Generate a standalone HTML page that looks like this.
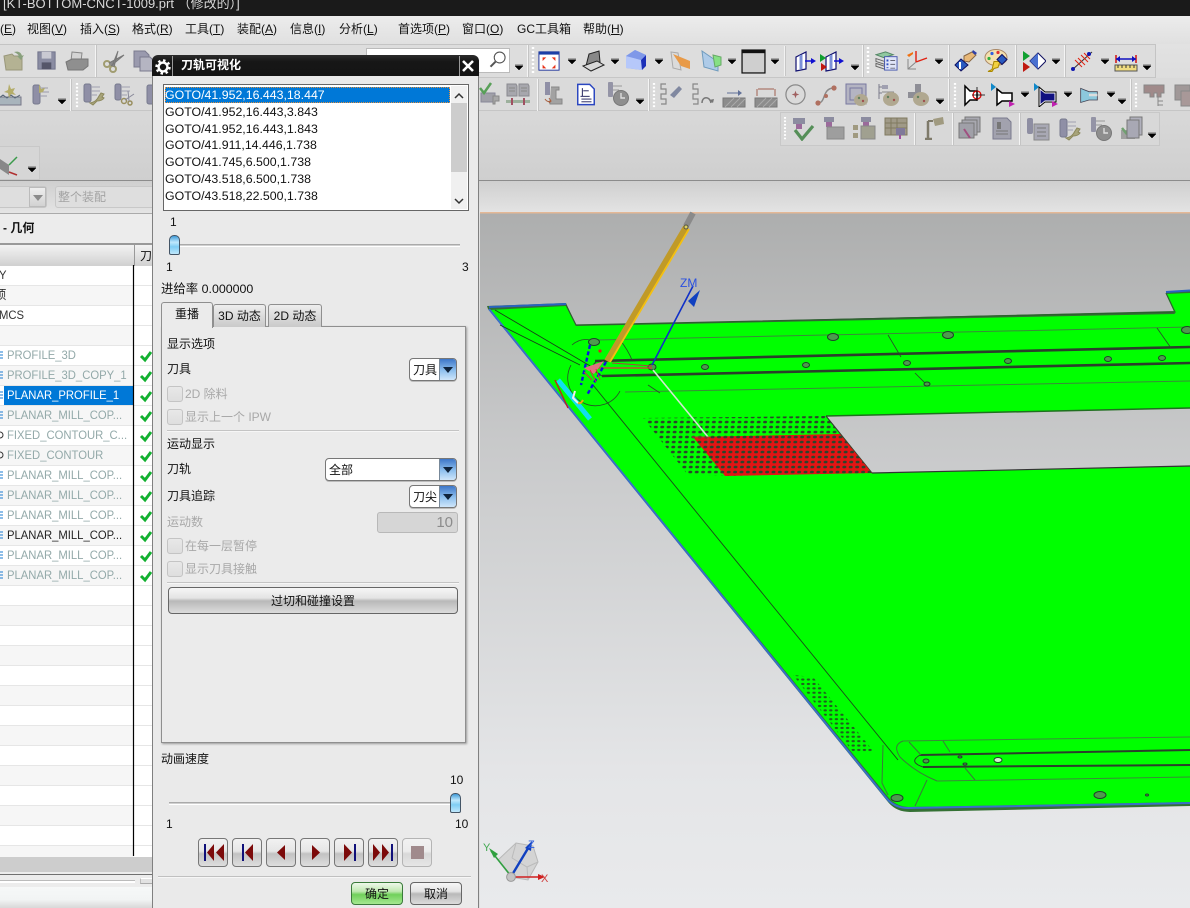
<!DOCTYPE html>
<html><head><meta charset="utf-8"><style>
html,body{margin:0;padding:0}
body{width:1190px;height:908px;overflow:hidden;position:relative;background:#e0e0e0;font:12px/16px "Liberation Sans","Noto Sans CJK SC",sans-serif;color:#111}
div{position:absolute;box-sizing:border-box}
.t{white-space:nowrap}
.m{top:21px}.m u{text-decoration:underline}
.r{left:0;width:134px;height:20px;border-bottom:1px solid #e6e6e6;background:#fff;overflow:hidden}
.r.a{background:#f6f6f6}
.n{left:7px;white-space:nowrap;color:#93a9a9;font-size:12.4px;line-height:19px;top:0;transform:scaleX(.91);transform-origin:0 0}
.dis{color:#a8a8a8}
.cb{width:16px;height:16px;border:1px solid #c4c4c4;border-radius:3px;background:linear-gradient(#e8e8e8,#dedede);left:167px}
.dd{background:#fff;border:1px solid #777;border-radius:4px;overflow:hidden;box-shadow:0 1px 0 #bbb}
.dd i{position:absolute;right:0;top:0;bottom:0;width:16px;background:linear-gradient(#3d76c8,#8fc0ee 55%,#cfe6fa);border-left:1px solid #789}
.dd b{position:absolute;right:3px;top:8px;border:5px solid transparent;border-top:6px solid #10243c;border-bottom:0}
.btn{background:linear-gradient(#f6f6f6,#e4e4e4 40%,#b9b9b9 52%,#dcdcdc);border:1px solid #666;border-radius:4px;text-align:center}
.pb{top:838px;width:30px;height:29px;background:linear-gradient(#f2f2f2,#e6e6e6 45%,#c2c2c2 55%,#dedede);border:1px solid #777;border-radius:4px}
.pb svg{position:absolute;left:0;top:0}
.tab{border:1px solid #8f8f8f;border-bottom:0;border-radius:3px 3px 0 0;text-align:center;background:linear-gradient(#eeeeee,#c9c9c9)}
.thumb{width:11px;height:20px;border:1px solid #456;border-radius:5px 5px 2px 2px;background:linear-gradient(#3e9ad8,#bfe8fc 35%,#7fcdf4 60%,#bfe8fb)}
</style></head><body>

<!-- title -->
<div style="left:0;top:0;width:1190px;height:16px;background:#1a1a1a;overflow:hidden"><div class="t" style="left:3px;top:-4px;color:#d8d8d8;font-size:13px">[KT-BOTTOM-CNCT-1009.prt （修改的）]</div></div>
<!-- menu -->
<div style="left:0;top:16px;width:1190px;height:28px;background:linear-gradient(#ececec,#e0e0e0)"></div>
<div class="t m" style="left:0">(<u>E</u>)</div>
<div class="t m" style="left:27px">视图(<u>V</u>)</div>
<div class="t m" style="left:80px">插入(<u>S</u>)</div>
<div class="t m" style="left:132px">格式(<u>R</u>)</div>
<div class="t m" style="left:185px">工具(<u>T</u>)</div>
<div class="t m" style="left:237px">装配(<u>A</u>)</div>
<div class="t m" style="left:290px">信息(<u>I</u>)</div>
<div class="t m" style="left:339px">分析(<u>L</u>)</div>
<div class="t m" style="left:398px">首选项(<u>P</u>)</div>
<div class="t m" style="left:462px">窗口(<u>O</u>)</div>
<div class="t m" style="left:517px">GC工具箱</div>
<div class="t m" style="left:583px">帮助(<u>H</u>)</div>

<!-- toolbar backdrop -->
<div style="left:0;top:44px;width:1190px;height:137px;background:linear-gradient(#e2e2e2,#cfcfcf);border-bottom:1px solid #8c8c8c;box-shadow:0 1px 1px #aaa"></div>
<div style="left:0;top:44px;width:1155px;height:34px;background:#dddddd;border-top:1px solid #c4c4c4;border-bottom:1px solid #c6c6c6"></div>
<div style="left:1155px;top:44px;width:1px;height:34px;background:#c4c4c4"></div>
<div style="left:0;top:78px;width:1190px;height:33px;background:#dadada;border-bottom:1px solid #c6c6c6"></div>
<div style="left:780px;top:112px;width:380px;height:34px;background:#d8d8d8;border:1px solid #c8c8c8"></div>
<div style="left:0;top:146px;width:40px;height:34px;background:#d6d6d6;border:1px solid #c8c8c8;border-left:0"></div>
<div style="left:366px;top:48px;width:144px;height:25px;background:#fff;border:1px solid #bbb"></div>

<svg width="1190" height="181" style="position:absolute;left:0;top:0" xmlns="http://www.w3.org/2000/svg">
<defs>
<symbol id="folder" viewBox="0 0 24 24"><path d="M2 7l8-2 2 2 8 0v14H4z" fill="#b4b293" stroke="#99977a"/><path d="M12 3c4-1 7 0 8 4l2-1-3 5-4-4 2 0c-1-2-3-3-5-4z" fill="#88a07c"/></symbol>
<symbol id="floppy" viewBox="0 0 24 24"><rect x="3" y="3" width="18" height="18" fill="#8a8ca2" stroke="#70728a"/><rect x="7" y="3" width="10" height="7" fill="#c9c9d2"/><rect x="7" y="14" width="10" height="7" fill="#55566a"/></symbol>
<symbol id="printer" viewBox="0 0 24 24"><path d="M7 3l10 1-1 8H6z" fill="#d4d4d4" stroke="#888"/><path d="M1 13l6-3h16v7l-5 4H3z" fill="#8f8f8f" stroke="#777"/></symbol>
<symbol id="scissors" viewBox="0 0 24 24"><g fill="none" stroke="#a09c70" stroke-width="2"><circle cx="5" cy="15" r="3"/><circle cx="11" cy="20" r="3"/></g><path d="M7 14L22 6 9 17M10 17L16 2 12 18" fill="#8a8a8a" stroke="#777"/></symbol>
<symbol id="doc" viewBox="0 0 24 24"><path d="M2 2h11l4 4v12H2z" fill="#9a9aae" stroke="#7a7a8e"/><path d="M8 8h10l4 4v10H8z" fill="#b5b5c2" stroke="#7a7a8e"/></symbol>
<symbol id="mag" viewBox="0 0 24 24"><circle cx="14" cy="9" r="6.5" fill="#fff" stroke="#555" stroke-width="1.3"/><path d="M9 14l-6 6" stroke="#555" stroke-width="2.4"/></symbol>
<symbol id="fit" viewBox="0 0 24 24"><rect x="1" y="2" width="22" height="20" fill="#fff" stroke="#1a2f9a"/><rect x="1" y="2" width="22" height="3" fill="#1c3fa6"/><path d="M5 8h4l-4 4zM19 8h-4l4 4zM5 20h4l-4-4zM19 20h-4l4-4z" fill="#e8341c"/></symbol>
<symbol id="laptop" viewBox="0 0 24 24"><path d="M5 17L8 5 18 2l1 11z" fill="#888" stroke="#222"/><path d="M2 17l14-5 7 4-13 6z" fill="#d8d8d8" stroke="#222"/></symbol>
<symbol id="cube" viewBox="0 0 24 24"><path d="M11 1l11 5-4 15-16-2V7z" fill="#8ca6f0"/><path d="M2 7l15 4 1 10-16-2z" fill="#b6c8fa"/><path d="M17 11l5-5v11l-4 4z" fill="#1c30b8"/><path d="M11 1l11 5-5 5-15-4z" fill="#7f98e8"/></symbol>
<symbol id="opanel" viewBox="0 0 24 24"><path d="M3 3l7 1 3 17-8-2z" fill="#dbdbdb" stroke="#aaa"/><path d="M5 5l17 7v8l-9-3z" fill="#e89a48"/></symbol>
<symbol id="gpanel" viewBox="0 0 24 24"><path d="M3 2l16 11v9L5 18z" fill="#aecbe8" stroke="#6f9bbd"/><path d="M14 6l8 2v8l-6 2z" fill="#86e084" stroke="#6a6"/></symbol>
<symbol id="sq" viewBox="0 0 24 24"><rect x="1" y="1" width="22" height="22" fill="#cfcfcf" stroke="#111" stroke-width="1.2"/><rect x="1" y="1" width="22" height="3" fill="#111"/></symbol>
<symbol id="w1" viewBox="0 0 24 24"><path d="M3 8l10-5v17L3 22z" fill="#fff" stroke="#101070" stroke-width="1.2"/><path d="M8 6v14" stroke="#7c90d8" stroke-width="3"/><path d="M12 12h8" stroke="#1010d0" stroke-width="1.5"/><path d="M18 9l5 3-5 3z" fill="#1010d0"/></symbol>
<symbol id="w2" viewBox="0 0 24 24"><path d="M6 8l10-5v17L6 22z" fill="#fff" stroke="#101070" stroke-width="1.2"/><path d="M11 6v14" stroke="#7c90d8" stroke-width="3"/><path d="M0 5l6 4-6 4z" fill="#10a030"/><path d="M1 14l6 4-6 4z" fill="#c01810"/><path d="M14 12h6" stroke="#1010d0" stroke-width="1.5"/><path d="M19 9l5 3-5 3z" fill="#1010d0"/></symbol>
<symbol id="layers" viewBox="0 0 24 24"><path d="M1 6l10-3 8 3-10 3z" fill="#90c8a0" stroke="#586"/><path d="M1 10l9 3v3L1 13zM1 15l9 3v3l-9-3z" fill="#ddd" stroke="#666"/><rect x="10" y="8" width="13" height="14" fill="#dfe4f8" stroke="#4a5ab0"/><path d="M12 11h2v2h-2zM12 15h2v2h-2zM12 19h2v1h-2z" fill="#3050c0"/><path d="M16 12h5M16 16h5M16 20h5" stroke="#667"/></symbol>
<symbol id="axes" viewBox="0 0 24 24"><path d="M11 13V2M11 13L22 9" stroke="#e02010" stroke-width="1.4" fill="none"/><path d="M11 13L3 20M3 10v10h8" stroke="#888" fill="none"/><path d="M2 6l6-3 0 2-4 3z" fill="#f07010"/></symbol>
<symbol id="hand" viewBox="0 0 24 24"><path d="M10 8l8-4 4 3-7 7-5-1z" fill="#e8b878" stroke="#864"/><path d="M19 2l4 3-2 2-3-3z" fill="#3040a8"/><path d="M7 11l7 6-7 6-6-6z" fill="#2a5ac0" stroke="#101060"/><path d="M6 14v7" stroke="#fff" stroke-width="2"/></symbol>
<symbol id="pal" viewBox="0 0 24 24"><ellipse cx="12" cy="9" rx="11" ry="8" fill="#f4e0b0" stroke="#a86"/><circle cx="8" cy="5" r="1.6" fill="#3060e0"/><circle cx="14" cy="4" r="1.6" fill="#e03030"/><circle cx="5" cy="10" r="1.6" fill="#30b040"/><path d="M4 23l4-2 2-8 6 0-2 6-4 1-2 3z" fill="#f2d040" stroke="#a80"/><path d="M18 6l5 5-5 5-5-5z" fill="#2a5ac0" stroke="#101060"/></symbol>
<symbol id="fd" viewBox="0 0 24 24"><path d="M1 2l7 5-7 5z" fill="#10a030"/><path d="M1 13l7 5-7 5z" fill="#c01810"/><path d="M16 4l8 8-8 8-8-8z" fill="#fff" stroke="#101060"/><path d="M16 4l-8 8 8 8z" fill="#4a70d0"/></symbol>
<symbol id="ticks" viewBox="0 0 24 24"><path d="M2 21L22 3" stroke="#333" stroke-width="1"/><path d="M5 11l7 7M8 9l7 7M11 6l7 7M14 4l6 6" stroke="#e02010"/><circle cx="3" cy="20" r="2" fill="#1018b0"/><circle cx="19" cy="5" r="2" fill="#1018b0"/></symbol>
<symbol id="ruler" viewBox="0 0 24 24"><path d="M2 5v8M22 5v8" stroke="#d01010" stroke-width="1.5"/><path d="M2 9h20" stroke="#1010c0" stroke-width="1.4"/><path d="M2 9l4-3v6zM22 9l-4-3v6z" fill="#1010c0"/><rect x="1" y="15" width="22" height="6" fill="#f0dc80" stroke="#555"/><path d="M4 15v3M8 15v3M12 15v3M16 15v3M20 15v3" stroke="#333"/></symbol>
<symbol id="wave" viewBox="0 0 24 24"><rect x="1" y="15" width="22" height="8" fill="#a8b4bc" stroke="#778"/><path d="M1 16l4-3 4 3 4-3 4 3 5-3" stroke="#567" fill="none"/><path d="M11 2l2 5 4-1-2 4 3 3-5-1-2 4-1-5-4-1 4-2z" fill="#b4ad6a"/></symbol>
<symbol id="cyl" viewBox="0 0 24 24"><rect x="3" y="3" width="7" height="19" rx="2" fill="#8f8fa6" stroke="#777a8e"/><path d="M10 6h8M10 10h9M10 14h7" stroke="#9b9bab"/><path d="M9 2l2 5 4-1-2 4-4 1" fill="#b4ad6a"/></symbol>
<symbol id="cylw" viewBox="0 0 24 24"><rect x="2" y="2" width="7" height="18" rx="2" fill="#8f8fa6" stroke="#777a8e"/><path d="M9 5h9M9 9h9M9 13h6" stroke="#a0a0b0"/><path d="M8 21c5-1 7-3 9-7l2-3 3 1-2 3 2 1c-2 3-5 3-7 3l-4 4z" fill="#a8a47a" stroke="#8c885c"/></symbol>
<symbol id="cyls" viewBox="0 0 24 24"><rect x="2" y="2" width="6" height="16" rx="2" fill="#8f8fa6" stroke="#777a8e"/><path d="M8 5h9M8 9h9M8 13h6" stroke="#a0a0b0"/><circle cx="11" cy="19" r="2.5" fill="none" stroke="#998f60" stroke-width="1.5"/><circle cx="17" cy="21" r="2" fill="none" stroke="#998f60" stroke-width="1.5"/><path d="M12 18l9-6M16 19l-1-10" stroke="#889"/></symbol>
<symbol id="chkm" viewBox="0 0 24 24"><rect x="3" y="11" width="14" height="9" fill="#a0a0a8" stroke="#889"/><path d="M15 14h6v5h-4v3h-2z" fill="#a8a8a8" stroke="#888"/><path d="M2 6l4 5L13 1" fill="none" stroke="#58a058" stroke-width="2.5"/></symbol>
<symbol id="twin" viewBox="0 0 24 24"><path d="M1 2h9l1 2v10H1zM13 2h9l1 2v10H13z" fill="#a7a7ad" stroke="#8a8a90"/><path d="M3 6h6M3 9h6M15 6h6M15 9h6" stroke="#888"/><rect x="0" y="18" width="24" height="3" fill="#9cb09c"/><path d="M6 16v7M18 16v7" stroke="#a05060" stroke-width="2"/></symbol>
<symbol id="mach" viewBox="0 0 24 24"><rect x="2" y="0" width="5" height="13" fill="#8f8fa6"/><path d="M8 5h8v3h-3v9h6v5H7v-4" fill="#a2a2a2" stroke="#888"/><path d="M2 17c2 3 4 3 6 2l-2-3M8 19l-2 2" stroke="#a86040" fill="none"/></symbol>
<symbol id="rep" viewBox="0 0 24 24"><path d="M3 1h13l5 5v17H3z" fill="#fff" stroke="#2a46c0" stroke-width="1.6"/><path d="M8 5v9M6 14h10M7 17h11M7 20h11M9 8h6" stroke="#101050"/></symbol>
<symbol id="cylc" viewBox="0 0 24 24"><rect x="2" y="0" width="5" height="15" rx="1" fill="#9494a6"/><path d="M7 4h9M7 8h6" stroke="#999"/><circle cx="15" cy="16" r="7.5" fill="#8e8e8e" stroke="#777"/><path d="M15 11v5h4" stroke="#ddd" stroke-width="1.4" fill="none"/></symbol>
<symbol id="ssf" viewBox="0 0 24 24"><path d="M7 2H2v5h5v5H2v5h5v5H2" fill="none" stroke="#888" stroke-width="1.2"/><path d="M11 13l9-9 3 3-8 9z" fill="#8088a0"/></symbol>
<symbol id="ssa" viewBox="0 0 24 24"><path d="M7 2H2v5h5v5H2v5h5v5H2" fill="none" stroke="#888" stroke-width="1.2"/><path d="M11 21c0-7 8-7 9 0" fill="none" stroke="#777" stroke-width="1.5"/><path d="M18 18l4 3 1-4z" fill="#777"/></symbol>
<symbol id="hatch" viewBox="0 0 24 24"><rect x="1" y="14" width="22" height="9" fill="#8c8c8c" stroke="#777"/><path d="M3 23l9-9M9 23l9-9M15 23l8-8" stroke="#aaa"/><path d="M5 9h12" stroke="#607098"/><path d="M16 6l4 3-4 3z" fill="#607098"/></symbol>
<symbol id="hatch2" viewBox="0 0 24 24"><rect x="1" y="14" width="22" height="9" fill="#8c8c8c" stroke="#777"/><path d="M3 23l9-9M9 23l9-9M15 23l8-8" stroke="#aaa"/><path d="M4 5h16M3 5v7M21 5v7" stroke="#a06050"/></symbol>
<symbol id="circ" viewBox="0 0 24 24"><circle cx="12" cy="12" r="10" fill="none" stroke="#8a8a8a" stroke-width="1.3"/><path d="M12 8l1 3 3 1-3 1-1 3-1-3-3-1 3-1z" fill="#a06060"/></symbol>
<symbol id="curve" viewBox="0 0 24 24"><path d="M4 20c8 0 4-14 15-15" fill="none" stroke="#8a8a8a" stroke-width="1.5"/><circle cx="4" cy="20" r="2.6" fill="#b07060"/><circle cx="20" cy="5" r="2.6" fill="#b07060"/><circle cx="12" cy="13" r="2" fill="#b07060"/></symbol>
<symbol id="fp" viewBox="0 0 24 24"><rect x="1" y="1" width="20" height="20" fill="#b4b4c2" stroke="#7878a0"/><rect x="5" y="5" width="12" height="12" fill="none" stroke="#7878a0"/><ellipse cx="16" cy="17" rx="7" ry="6" fill="#b0a890"/><circle cx="14" cy="15" r="1.2" fill="#608060"/><circle cx="18" cy="18" r="1.2" fill="#a05050"/></symbol>
<symbol id="lp" viewBox="0 0 24 24"><path d="M3 1v15M3 4h3M3 10h3" stroke="#7a7a8a" fill="none"/><rect x="6" y="2" width="6" height="4" fill="#a0a0b0"/><path d="M6 9h12" stroke="#888"/><ellipse cx="15" cy="16" rx="8" ry="7" fill="#b0a890"/><circle cx="12" cy="14" r="1.2" fill="#608060"/><circle cx="18" cy="17" r="1.2" fill="#a05050"/></symbol>
<symbol id="pp" viewBox="0 0 24 24"><path d="M9 1h6v10l-5 4H2V9h7z" fill="#8e8e96"/><ellipse cx="15" cy="16" rx="8" ry="7" fill="#b0a890"/><circle cx="12" cy="14" r="1.2" fill="#608060"/><circle cx="18" cy="18" r="1.2" fill="#a05050"/></symbol>
<symbol id="t1" viewBox="0 0 24 24"><path d="M3 3l5 5h7v9H8l-5 5z" fill="#fff" stroke="#000" stroke-width="1.5"/><circle cx="15" cy="12" r="4" fill="none" stroke="#e00000" stroke-width="1.2"/><path d="M10 12h13M15 4v14" stroke="#000" stroke-width=".8"/></symbol>
<symbol id="t2" viewBox="0 0 24 24"><path d="M6 6l5 4h10v8H11l-5 4z" fill="#fff" stroke="#000" stroke-width="1.5"/><path d="M0 0l5 4-5 4z" fill="#1088c8"/><path d="M18 18l6 3-6 3z" fill="#c020b0"/></symbol>
<symbol id="t3" viewBox="0 0 24 24"><path d="M6 6l5 4h10v8H11l-5 4z" fill="#101080" stroke="#fff" stroke-width="1"/><path d="M5 4l6 5h11v10H11l-6 5z" fill="none" stroke="#000"/><path d="M0 0l5 4-5 4z" fill="#1088c8"/><path d="M18 18l6 3-6 3z" fill="#c020b0"/></symbol>
<symbol id="t4" viewBox="0 0 24 24"><path d="M2 4l10 4h10v10H12L2 21z" fill="#8cc8dc" stroke="#445"/><path d="M12 12h10" stroke="#ddd" stroke-width="3"/></symbol>
<symbol id="m1" viewBox="0 0 24 24"><path d="M1 2h20v8h-3v4h-4v-4h-3v4H7v-4H1z" fill="#a08a8a" stroke="#888"/><path d="M15 14v9M15 18h5M15 22h5" stroke="#888"/></symbol>
<symbol id="m2" viewBox="0 0 24 24"><rect x="2" y="2" width="15" height="15" fill="#a09898" stroke="#888"/><rect x="8" y="8" width="15" height="15" fill="#a89898" stroke="#888"/></symbol>
<symbol id="cv" viewBox="0 0 24 24"><rect x="2" y="1" width="12" height="6" fill="#8c8ca0"/><rect x="5" y="7" width="6" height="5" fill="#9b6a9b"/><path d="M4 13l7 9L22 9" fill="none" stroke="#558f58" stroke-width="3.2"/></symbol>
<symbol id="c2" viewBox="0 0 24 24"><rect x="2" y="1" width="10" height="5" fill="#8c8ca0"/><rect x="4" y="6" width="6" height="5" fill="#9b6a9b"/><rect x="5" y="11" width="17" height="12" fill="#9e9e9e" stroke="#888"/></symbol>
<symbol id="c3" viewBox="0 0 24 24"><rect x="9" y="1" width="10" height="5" fill="#8c8ca0"/><rect x="11" y="6" width="6" height="4" fill="#9b6a9b"/><rect x="9" y="10" width="14" height="13" fill="#a0a090" stroke="#888"/><rect x="1" y="9" width="5" height="5" fill="#a09a80"/><rect x="1" y="17" width="5" height="5" fill="#a09a80"/></symbol>
<symbol id="c4" viewBox="0 0 24 24"><rect x="1" y="2" width="22" height="17" fill="#a09a88" stroke="#807a60"/><path d="M1 7h22M1 12h22M7 2v17M13 2v17" stroke="#807a60"/><rect x="12" y="12" width="9" height="7" fill="#807a9a"/><path d="M16 19v4" stroke="#a050a0" stroke-width="2"/></symbol>
<symbol id="c5" viewBox="0 0 24 24"><path d="M6 5v17M3 23h7" stroke="#7e7a6a" stroke-width="2.5"/><path d="M6 5h5" stroke="#7e7a6a" stroke-width="2"/><path d="M11 3l10-2 1 7-9 2z" fill="#a09a80"/></symbol>
<symbol id="c6" viewBox="0 0 24 24"><rect x="7" y="1" width="15" height="15" fill="#a8a8b0" stroke="#777"/><rect x="4" y="4" width="15" height="15" fill="#a8a8b0" stroke="#777"/><rect x="1" y="7" width="15" height="15" fill="#a0a0a8" stroke="#777"/><path d="M6 13l6 9" stroke="#a05080" stroke-width="2"/></symbol>
<symbol id="c7" viewBox="0 0 24 24"><path d="M3 2h14l4 4v17H3z" fill="#a2a2ae" stroke="#7a7a8e"/><rect x="7" y="6" width="4" height="7" fill="#777"/><path d="M6 15h12M6 18h12" stroke="#777"/></symbol>
<symbol id="c8" viewBox="0 0 24 24"><rect x="1" y="1" width="6" height="16" rx="2" fill="#8e8ea2"/><rect x="8" y="7" width="15" height="16" fill="#a8a8b4" stroke="#888"/><path d="M11 11h9M11 15h9M11 19h9" stroke="#777"/></symbol>
<symbol id="c9" viewBox="0 0 24 24"><rect x="2" y="14" width="14" height="9" fill="#a0a0a0"/><path d="M3 12l4 5L16 6" fill="none" stroke="#70a070" stroke-width="2.5"/><rect x="11" y="1" width="12" height="18" fill="#b0b0bc" stroke="#777"/><rect x="8" y="4" width="12" height="18" fill="#a8a8b4" stroke="#777"/></symbol>
<symbol id="view" viewBox="0 0 24 24"><path d="M0 5l12 8v10L0 15z" fill="#888"/><path d="M12 13l8-8" stroke="#3a9a4a" stroke-width="1.5"/><path d="M12 20l8 3" stroke="#b03030" stroke-width="1.5"/></symbol>
<symbol id="dd" viewBox="0 0 8 6"><path d="M0 1h8M0 2h8l-4 4z" fill="#000" stroke="#000" stroke-width=".5"/></symbol>
<symbol id="grip" viewBox="0 0 4 28"><path d="M2 0v28" stroke="#fff" stroke-width="2.4" stroke-dasharray="2 2"/></symbol>
<symbol id="sep" viewBox="0 0 2 32"><path d="M.5 0v32" stroke="#f4f4f4"/><path d="M1.5 0v32" stroke="#c4c4c4"/></symbol>
</defs>
<!-- row 1 -->
<g>
<use href="#folder" x="2" y="49" width="24" height="24"/><use href="#floppy" x="35" y="49" width="23" height="23"/><use href="#printer" x="65" y="49" width="24" height="24"/><use href="#sep" x="95" y="45" width="2" height="32"/><use href="#scissors" x="102" y="49" width="24" height="24"/><use href="#doc" x="132" y="49" width="24" height="24"/>
<use href="#mag" x="488" y="50" width="20" height="20"/><use href="#dd" x="515" y="64" width="8" height="6"/><use href="#sep" x="527" y="45" width="2" height="32"/><use href="#grip" x="531" y="47" width="4" height="28"/>
<use href="#fit" x="538" y="50" width="22" height="22"/><use href="#dd" x="568" y="58" width="8" height="6"/>
<use href="#laptop" x="581" y="49" width="24" height="24"/><use href="#dd" x="611" y="58" width="8" height="6"/>
<use href="#cube" x="624" y="49" width="24" height="24"/><use href="#dd" x="655" y="58" width="8" height="6"/>
<use href="#opanel" x="668" y="49" width="24" height="24"/><use href="#gpanel" x="699" y="49" width="24" height="24"/><use href="#dd" x="728" y="58" width="8" height="6"/>
<use href="#sq" x="741" y="49" width="25" height="25"/><use href="#dd" x="771" y="58" width="8" height="6"/><use href="#sep" x="784" y="46" width="2" height="30"/>
<use href="#w1" x="793" y="49" width="24" height="24"/><use href="#w2" x="820" y="49" width="24" height="24"/><use href="#dd" x="851" y="64" width="8" height="6"/><use href="#sep" x="862" y="45" width="2" height="32"/><use href="#grip" x="866" y="47" width="4" height="28"/>
<use href="#layers" x="875" y="49" width="23" height="23"/><use href="#axes" x="905" y="49" width="24" height="24"/><use href="#dd" x="935" y="58" width="8" height="6"/><use href="#sep" x="948" y="45" width="2" height="32"/>
<use href="#hand" x="954" y="48" width="24" height="24"/><use href="#pal" x="984" y="48" width="24" height="25"/><use href="#sep" x="1015" y="45" width="2" height="32"/>
<use href="#fd" x="1022" y="49" width="24" height="24"/><use href="#dd" x="1052" y="58" width="8" height="6"/><use href="#sep" x="1064" y="45" width="2" height="32"/>
<use href="#ticks" x="1070" y="49" width="24" height="24"/><use href="#dd" x="1101" y="58" width="8" height="6"/>
<use href="#ruler" x="1114" y="50" width="24" height="24"/><use href="#dd" x="1143" y="64" width="8" height="6"/>
</g>
<!-- row 2 -->
<g>
<use href="#wave" x="-2" y="82" width="24" height="24"/><use href="#cyl" x="30" y="82" width="24" height="24"/><use href="#dd" x="58" y="98" width="8" height="6"/><use href="#sep" x="70" y="79" width="2" height="32"/><use href="#grip" x="75" y="83" width="4" height="26"/>
<use href="#cylw" x="82" y="82" width="24" height="24"/><use href="#cyls" x="113" y="82" width="24" height="24"/><use href="#cyl" x="144" y="82" width="24" height="24"/>
<use href="#chkm" x="478" y="82" width="24" height="24"/><use href="#twin" x="506" y="82" width="24" height="24"/><use href="#sep" x="537" y="79" width="2" height="32"/>
<use href="#mach" x="543" y="82" width="24" height="24"/><use href="#rep" x="575" y="83" width="22" height="23"/><use href="#cylc" x="606" y="82" width="24" height="24"/><use href="#dd" x="636" y="98" width="8" height="6"/><use href="#sep" x="648" y="79" width="2" height="32"/><use href="#grip" x="652" y="83" width="4" height="26"/>
<use href="#ssf" x="659" y="82" width="24" height="24"/><use href="#ssa" x="691" y="82" width="24" height="24"/><use href="#hatch" x="722" y="84" width="24" height="24"/><use href="#hatch2" x="754" y="84" width="24" height="24"/><use href="#circ" x="784" y="83" width="23" height="23"/><use href="#curve" x="814" y="83" width="24" height="24"/><use href="#fp" x="845" y="83" width="24" height="24"/><use href="#lp" x="876" y="83" width="24" height="24"/><use href="#pp" x="906" y="83" width="24" height="24"/><use href="#dd" x="936" y="98" width="8" height="6"/><use href="#sep" x="948" y="79" width="2" height="32"/><use href="#grip" x="953" y="83" width="4" height="26"/>
<use href="#t1" x="962" y="83" width="24" height="24"/><use href="#t2" x="991" y="83" width="24" height="24"/><use href="#dd" x="1021" y="91" width="8" height="6"/><use href="#t3" x="1034" y="83" width="24" height="24"/><use href="#dd" x="1064" y="91" width="8" height="6"/><use href="#t4" x="1079" y="85" width="20" height="20"/><use href="#dd" x="1107" y="91" width="8" height="6"/><use href="#dd" x="1118" y="98" width="8" height="6"/><use href="#sep" x="1130" y="79" width="2" height="32"/><use href="#grip" x="1134" y="83" width="4" height="26"/>
<use href="#m1" x="1143" y="83" width="24" height="24"/><use href="#m2" x="1173" y="83" width="24" height="24"/>
</g>
<!-- row 3 -->
<g>
<use href="#grip" x="783" y="117" width="4" height="24"/>
<use href="#cv" x="791" y="117" width="24" height="24"/><use href="#c2" x="822" y="116" width="24" height="24"/><use href="#c3" x="852" y="116" width="24" height="24"/><use href="#c4" x="884" y="116" width="24" height="24"/><use href="#sep" x="914" y="113" width="2" height="32"/>
<use href="#c5" x="922" y="116" width="24" height="24"/><use href="#sep" x="952" y="113" width="2" height="32"/><use href="#c6" x="958" y="116" width="24" height="24"/><use href="#c7" x="990" y="116" width="24" height="24"/><use href="#sep" x="1019" y="113" width="2" height="32"/>
<use href="#c8" x="1026" y="117" width="24" height="24"/><use href="#cylw" x="1058" y="117" width="24" height="24"/><use href="#cylc" x="1089" y="117" width="24" height="24"/><use href="#c9" x="1119" y="116" width="24" height="24"/><use href="#dd" x="1148" y="132" width="8" height="6"/>
<use href="#view" x="-3" y="152" width="24" height="24"/><use href="#dd" x="28" y="166" width="8" height="6"/>
</g>
</svg>

<!-- filter bar -->
<div style="left:0;top:181px;width:1190px;height:32px;background:linear-gradient(#cfcfcf,#e4e4e4)"></div>
<div style="left:-4px;top:186px;width:51px;height:22px;border:1px solid #c6c6c6;border-radius:3px;background:#dedede"></div>
<div style="left:29px;top:187px;width:17px;height:20px;background:linear-gradient(#eee,#d2d2d2);border:1px solid #bbb"></div>
<div style="left:33px;top:195px;border:5px solid transparent;border-top:6px solid #8b8b8b;border-bottom:0"></div>
<div class="t" style="left:55px;top:186px;width:110px;height:22px;border:1px solid #c8c8c8;border-radius:3px;background:#dedede;color:#a3a3a3;padding:2px 2px">整个装配</div>

<!-- viewport -->
<svg width="1190" height="908" style="position:absolute;left:0;top:0" viewBox="0 0 1190 908" xmlns="http://www.w3.org/2000/svg">
<defs>
<linearGradient id="bg" gradientUnits="userSpaceOnUse" x1="0" y1="213" x2="0" y2="908"><stop offset="0" stop-color="#adaeae"/><stop offset=".33" stop-color="#c8c9ca"/><stop offset=".8" stop-color="#e4e5e7"/><stop offset="1" stop-color="#e9eaec"/></linearGradient>
<pattern id="dots" width="6.4" height="5" patternUnits="userSpaceOnUse" patternTransform="skewX(-5)"><ellipse cx="2" cy="2" rx="2" ry="1.35" fill="#2c442c"/></pattern>
<pattern id="dots3" width="5.6" height="4.4" patternUnits="userSpaceOnUse"><ellipse cx="2" cy="2" rx="1.7" ry="1.1" fill="#1f5f1f"/></pattern>
</defs>
<rect x="480" y="213" width="710" height="695" fill="url(#bg)"/>
<rect x="480" y="212" width="710" height="1.5" fill="#e4b896"/>
<!-- rim -->
<path d="M488 309L487 306 566 303 576 325 1175 311 1166 292 1190 290V806L910 812Q896 812 888 802Z" fill="#2a6a2a" opacity=".95"/>
<path d="M490 310L566 306 576 326 1175 314 1166 294 1190 293V802L908 807Q896 806 889 798Z" fill="#00ff00"/>
<path d="M489 309L888 800Q896 808 908 808L1190 803" fill="none" stroke="#3a70c8" stroke-width="2"/>
<path d="M489 307L566 304M1166 292L1190 290.500" fill="none" stroke="#2a62c0" stroke-width="2"/>
<path d="M566 305L576 325 1175 312 1166 293" fill="none" stroke="#2e5e30" stroke-width="1.2"/>
<!-- window -->
<path d="M826 416L1190 408V466L872 473Z" fill="url(#bg)"/>
<path d="M826 416L1190 408" stroke="#1f6f1f" stroke-width="1.5" fill="none"/><path d="M872 473L1190 466" stroke="#333" stroke-width="1.2" fill="none"/>
<path d="M826 416L872 473" stroke="#2c442c" stroke-width="1" fill="none"/>
<!-- red & perforation -->
<path d="M643 418L826 416 872 473 725 476 688 475Z" fill="url(#dots)"/>
<path d="M693 437L840 434 872 473 725 476Z" fill="#e41414"/>
<path d="M693 437L840 434 872 473 725 476Z" fill="url(#dots)"/>
<path d="M793 675L813 677 875 753 853 752Z" fill="url(#dots3)"/>
<!-- slots -->
<g fill="none" stroke="#2b3f2b">
<path d="M595 361L1190 347" stroke-width="2.600"/><path d="M602 376L1190 363" stroke-width="2.600"/>
<path d="M597 340L1190 327" stroke="#3a8a3a"/><path d="M625 392L1190 381" stroke="#3a8a3a"/>
<path d="M596 362Q588 368 602 376"/>
<path d="M920 755L1190 750" stroke-width="2"/><path d="M923 767L1190 765" stroke-width="2"/>
<path d="M920 755Q908 762 923 767"/>
<path d="M903 741L1190 737" stroke="#3a8a3a"/><path d="M937 781L1190 777" stroke="#3a8a3a"/>
<path d="M903 741Q892 745 900 757Q915 772 937 781" stroke="#3a7a3a"/>
<path d="M883 745L882 783 888 795M927 780L915 806M909 742L921 755M943 741L950 752M965 768L975 780" stroke="#3a7a3a"/>
<path d="M495 310L597 370M500 325L580 365" stroke="#1a3a1a" stroke-width=".8"/>
<path d="M593 385L898 760" stroke="#1a4a1a" stroke-width=".9"/>
<path d="M888 335L901 357M1157 328L1171 348M915 373L926 384M648 385L660 393M572 345A23 27 0 0 1 590 340M571 365A20 20 0 0 0 620 391M620 340Q628 350 632 360" stroke="#2a4a2a" stroke-width=".8"/>
</g>
<g fill="#4e9a4e" stroke="#20402a" stroke-width="1">
<ellipse cx="594" cy="342" rx="5.500" ry="3.500"/><ellipse cx="833" cy="337" rx="5.500" ry="3.500"/><ellipse cx="948" cy="335" rx="5.500" ry="3.500"/><ellipse cx="1187" cy="330" rx="5.500" ry="3.500"/>
<ellipse cx="705" cy="367" rx="3.500" ry="2.500"/><ellipse cx="806" cy="365" rx="3.500" ry="2.500"/><ellipse cx="907" cy="363" rx="3.500" ry="2.500"/><ellipse cx="1008" cy="361" rx="3.500" ry="2.500"/><ellipse cx="1108" cy="359" rx="3.500" ry="2.500"/><ellipse cx="1162" cy="358" rx="3.500" ry="2.500"/>
<ellipse cx="927" cy="384" rx="3" ry="2"/><ellipse cx="652" cy="367" rx="4" ry="3"/>
<ellipse cx="926" cy="761" rx="3" ry="2"/><ellipse cx="998" cy="760" rx="4" ry="2.500" fill="#d0f0d0"/><ellipse cx="960" cy="757" rx="2" ry="1"/><ellipse cx="965" cy="764" rx="2" ry="1"/>
<ellipse cx="897" cy="798" rx="6" ry="3.500"/><ellipse cx="1100" cy="795" rx="6" ry="3.500"/><ellipse cx="1147" cy="795" rx="1.500" ry="1"/>
</g>
<!-- tool -->
<path d="M686 226L693 213" stroke="#8a8a8a" stroke-width="6"/>
<path d="M686 227L607 361" stroke="#c09a28" stroke-width="6"/>
<path d="M689 229L610 362" stroke="#f4c010" stroke-width="1.800"/>
<circle cx="686" cy="227" r="2" fill="#ddd060" stroke="#554"/>
<!-- zm arrow -->
<path d="M652 365L693 286" stroke="#1030c8" stroke-width="1.600"/>
<path d="M700 290L688 301 694 307Z" fill="#1040c0"/>
<text x="680" y="287" font-family="Liberation Sans" font-size="12" fill="#2a50e0">ZM</text>
<!-- path markers -->
<path d="M652 368L590 368" stroke="#e03040" stroke-width="1.200"/>
<path d="M612 363L652 366" stroke="#b04040" stroke-width="1"/>
<path d="M653 370L708 437" stroke="#d0e8d0" stroke-width="1.600"/>
<path d="M590 345L581 385" stroke="#0a14e0" stroke-width="2.400" stroke-dasharray="4 2.500"/>
<path d="M606 362L587 395" stroke="#0a14e0" stroke-width="2.400" stroke-dasharray="4 2.500"/>
<path d="M558 380L590 419" stroke="#10dff0" stroke-width="5"/>
<path d="M555 380L568 408" stroke="#c02020" stroke-width="1.400"/>
<path d="M575 391L573 398 578 403" fill="none" stroke="#f0f0f0" stroke-width="2"/>
<path d="M578 403Q581 404 583 400" fill="none" stroke="#f0a810" stroke-width="2"/>
<path d="M584 368L604 361 594 374Z" fill="#e07080"/>
<path d="M584 372L592 380M590 370L596 382M596 369L600 380" stroke="#d03040" stroke-width="1"/>
<circle cx="600" cy="351" r="1.600" fill="#e02020"/>
<path d="M692 437H708V446" stroke="#b04030" fill="none"/>
<!-- triad -->
<g>
<path d="M498 860l18-17 17 3 5 16-10 18-17-3z" fill="#d4d4d4" stroke="#b8b8b8"/>
<path d="M512 858l15 9 11-5M527 867l1 13M516 843l-4 15" stroke="#bbb" fill="none"/>
<path d="M511 876L491 851" stroke="#30a040" stroke-width="1.600"/><path d="M489 848l9 6-4 4z" fill="#30a040"/>
<path d="M511 877H540" stroke="#d02020" stroke-width="1.600"/><path d="M538 874l7 3-7 3z" fill="#d02020"/>
<path d="M512 875L530 845" stroke="#1040c0" stroke-width="2.400"/><path d="M532 841l-1 10-6-3z" fill="#1040c0"/>
<circle cx="511" cy="877" r="4.400" fill="#c4c4c4" stroke="#999"/>
<text x="483" y="851" font-family="Liberation Sans" font-size="11" fill="#40a850">Y</text>
<text x="528" y="848" font-family="Liberation Sans" font-size="11" fill="#3060e0">Z</text>
<text x="541" y="882" font-family="Liberation Sans" font-size="11" fill="#d04040">X</text>
</g>
</svg>

<!-- left panel -->
<div style="left:0;top:213px;width:152px;height:695px;background:#ececec;overflow:hidden">
<div style="left:0;top:0;width:152px;height:1px;background:#aaa"></div>
<div class="t" style="left:3px;top:7px;font-weight:bold">- 几何</div>
<div style="left:0;top:30px;width:152px;height:2px;background:#999"></div>
<div style="left:0;top:32px;width:152px;height:21px;background:linear-gradient(#f2f2f2,#e2e2e2 50%,#d0d0d0)"></div>
<div style="left:134px;top:32px;width:1px;height:21px;background:#999"></div>
<div class="t" style="left:140px;top:35px">刀轨</div>
<div style="left:0;top:53px;width:152px;height:591px;background:#fff"></div>
<div style="left:0;top:644px;width:152px;height:15px;background:#cdcdcd"></div>
<div style="left:0;top:661px;width:152px;height:1px;background:#707070"></div>
<div style="left:0;top:667px;width:135px;height:3px;border-top:1px solid #bbb;background:#fff"></div>
<div style="left:140px;top:665px;width:12px;height:6px;background:#e2e2e2;border-bottom:1px solid #aaa;border-left:1px solid #bbb;border-top:1px solid #fff"></div>
<div style="left:0;top:674px;width:152px;height:21px;background:linear-gradient(#f6f8f8,#f2f4f4 60%,#d8d8d8)"></div>
</div>

<div style="left:0;top:266px;width:152px;height:591px;overflow:hidden">
<div class="r" style="top:0"><div class="n" style="left:-1px;color:#333">Y</div></div>
<div class="r a" style="top:20px"><div class="n" style="left:-5px;color:#333">项</div></div>
<div class="r" style="top:40px"><div class="n" style="left:-1px;color:#333">MCS</div></div>
<div class="r a" style="top:60px"></div>
<div class="r" style="top:80px"><div class="n">PROFILE_3D</div></div>
<div class="r a" style="top:100px"><div class="n">PROFILE_3D_COPY_1</div></div>
<div class="r" style="top:120px;width:134px"><div style="left:4px;top:0;width:130px;height:19px;background:#0078d7"></div><div class="n" style="color:#fff">PLANAR_PROFILE_1</div></div>
<div class="r a" style="top:140px"><div class="n">PLANAR_MILL_COP...</div></div>
<div class="r" style="top:160px"><div class="n">FIXED_CONTOUR_C...</div></div>
<div class="r a" style="top:180px"><div class="n">FIXED_CONTOUR</div></div>
<div class="r" style="top:200px"><div class="n">PLANAR_MILL_COP...</div></div>
<div class="r a" style="top:220px"><div class="n">PLANAR_MILL_COP...</div></div>
<div class="r" style="top:240px"><div class="n">PLANAR_MILL_COP...</div></div>
<div class="r a" style="top:260px"><div class="n" style="color:#222">PLANAR_MILL_COP...</div></div>
<div class="r" style="top:280px"><div class="n">PLANAR_MILL_COP...</div></div>
<div class="r a" style="top:300px"><div class="n">PLANAR_MILL_COP...</div></div>
<div class="r" style="top:320px"></div><div class="r a" style="top:340px"></div><div class="r" style="top:360px"></div><div class="r a" style="top:380px"></div><div class="r" style="top:400px"></div><div class="r a" style="top:420px"></div><div class="r" style="top:440px"></div><div class="r a" style="top:460px"></div><div class="r" style="top:480px"></div><div class="r a" style="top:500px"></div><div class="r" style="top:520px"></div><div class="r a" style="top:540px"></div><div class="r" style="top:560px"></div><div class="r a" style="top:580px"></div>
<div style="left:134px;top:0;width:18px;height:591px;background:repeating-linear-gradient(#fff 0 19px,#e6e6e6 19px 20px)"></div>
</div>
<svg width="152" height="908" style="position:absolute;left:0;top:0" xmlns="http://www.w3.org/2000/svg">
<path d="M133.500 265V856" stroke="#000" stroke-width="1.200"/>
<g fill="none" stroke="#1a7bd0" stroke-width="1">
<path d="M0 352h3M0 355h3M0 358h3M0 372h3M0 375h3M0 378h3M0 392h3M0 395h3M0 398h3M0 412h3M0 415h3M0 418h3M0 472h3M0 475h3M0 478h3M0 492h3M0 495h3M0 498h3M0 512h3M0 515h3M0 518h3M0 532h3M0 535h3M0 538h3M0 552h3M0 555h3M0 558h3M0 572h3M0 575h3M0 578h3"/>
</g>
<path d="M0 432a3 3 0 0 1 0 6M0 452a3 3 0 0 1 0 6" stroke="#333" fill="none"/>
<g fill="none" stroke="#12b030" stroke-width="3">
<path d="M141 356l4 4 6-8"/><path d="M141 376l4 4 6-8"/><path d="M141 396l4 4 6-8"/><path d="M141 416l4 4 6-8"/><path d="M141 436l4 4 6-8"/><path d="M141 456l4 4 6-8"/><path d="M141 476l4 4 6-8"/><path d="M141 496l4 4 6-8"/><path d="M141 516l4 4 6-8"/><path d="M141 536l4 4 6-8"/><path d="M141 556l4 4 6-8"/><path d="M141 576l4 4 6-8"/>
</g>
</svg>

<!-- dialog -->
<div style="left:152px;top:76px;width:327px;height:832px;background:#eaeaea;border-left:1px solid #808080;border-right:1px solid #808080"></div>
<div style="left:152px;top:55px;width:327px;height:21px;background:linear-gradient(#2c2c2c,#171717 30%,#141414);border-radius:6px 6px 0 0"></div>
<svg width="20" height="20" style="position:absolute;left:153px;top:57px" viewBox="0 0 20 20"><g fill="none" stroke="#fff"><circle cx="10" cy="10" r="4.400" stroke-width="2.400"/><circle cx="10" cy="10" r="6.400" stroke-width="2.600" stroke-dasharray="2.400 2.600"/></g></svg>
<div style="left:172px;top:56px;width:1px;height:20px;background:#999"></div>
<div class="t" style="left:181px;top:57px;color:#fff;font-weight:bold;font-size:12px">刀轨可视化</div>
<div style="left:459px;top:56px;width:1px;height:20px;background:#999"></div>
<svg width="14" height="14" style="position:absolute;left:461px;top:59px" viewBox="0 0 14 14"><path d="M2 2l10 10M12 2L2 12" stroke="#fff" stroke-width="2.600"/></svg>

<!-- list -->
<div style="left:163px;top:84px;width:306px;height:127px;background:#fff;border:1px solid #666"></div>
<div style="left:165px;top:87px;width:285px;height:16px;background:#0078d7;border:1px dotted #e09040"></div>
<div style="left:451px;top:86px;width:16px;height:123px;background:#f0f0f0"></div>
<div style="left:451px;top:103px;width:16px;height:69px;background:#cdcdcd"></div>
<svg width="16" height="123" style="position:absolute;left:451px;top:86px"><path d="M4 12l4-4 4 4M4 113l4 4 4-4" fill="none" stroke="#333" stroke-width="1.500"/></svg>
<div class="t" style="left:165px;top:87px;color:#fff;font-size:12.35px">GOTO/41.952,16.443,18.447</div>
<div class="t" style="left:165px;top:104px;font-size:12.35px">GOTO/41.952,16.443,3.843</div>
<div class="t" style="left:165px;top:121px;font-size:12.35px">GOTO/41.952,16.443,1.843</div>
<div class="t" style="left:165px;top:137px;font-size:12.35px">GOTO/41.911,14.446,1.738</div>
<div class="t" style="left:165px;top:154px;font-size:12.35px">GOTO/41.745,6.500,1.738</div>
<div class="t" style="left:165px;top:171px;font-size:12.35px">GOTO/43.518,6.500,1.738</div>
<div class="t" style="left:165px;top:188px;font-size:12.35px">GOTO/43.518,22.500,1.738</div>

<!-- slider 1 -->
<div class="t" style="left:170px;top:214px">1</div>
<div style="left:175px;top:244px;width:285px;height:3px;border-top:1px solid #aaa;border-bottom:1px solid #fff;background:#d0d0d0"></div>
<div class="thumb" style="left:169px;top:235px"></div>
<div class="t" style="left:166px;top:259px">1</div>
<div class="t" style="left:462px;top:259px">3</div>
<div class="t" style="left:161px;top:281px;font-size:12.4px">进给率 0.000000</div>

<!-- tabs -->
<div style="left:161px;top:326px;width:305px;height:417px;background:#ebebeb;border:1px solid #8f8f8f;box-shadow:1px 1px 2px #999"></div>
<div class="tab" style="left:213px;top:304px;width:53px;height:23px;padding-top:3px">3D 动态</div>
<div class="tab" style="left:268px;top:304px;width:54px;height:23px;padding-top:3px">2D 动态</div>
<div class="tab" style="left:161px;top:302px;width:52px;height:26px;background:#ebebeb;padding-top:3px;z-index:2">重播</div>

<div class="t" style="left:167px;top:336px">显示选项</div>
<div class="t" style="left:167px;top:361px">刀具</div>
<div class="dd" style="left:409px;top:358px;width:48px;height:23px"><span style="position:absolute;left:3px;top:3px">刀具</span><i></i><b></b></div>
<div class="cb" style="top:386px"></div><div class="t dis" style="left:185px;top:386px">2D 除料</div>
<div class="cb" style="top:409px"></div><div class="t dis" style="left:185px;top:409px">显示上一个 IPW</div>
<div style="left:167px;top:430px;width:292px;height:2px;background:#f6f6f6;border-top:1px solid #c4c4c4"></div>
<div class="t" style="left:167px;top:436px">运动显示</div>
<div class="t" style="left:167px;top:461px">刀轨</div>
<div class="dd" style="left:325px;top:458px;width:132px;height:23px"><span style="position:absolute;left:3px;top:3px">全部</span><i></i><b></b></div>
<div class="t" style="left:167px;top:488px">刀具追踪</div>
<div class="dd" style="left:409px;top:485px;width:48px;height:23px"><span style="position:absolute;left:3px;top:3px">刀尖</span><i></i><b></b></div>
<div class="t dis" style="left:167px;top:514px">运动数</div>
<div class="t" style="left:377px;top:512px;width:81px;height:21px;background:#d6d6d6;border:1px solid #b8b8b8;border-radius:3px;text-align:right;padding:2px 4px;color:#8c8c8c;font-size:15px">10</div>
<div class="cb" style="top:538px"></div><div class="t dis" style="left:185px;top:538px">在每一层暂停</div>
<div class="cb" style="top:561px"></div><div class="t dis" style="left:185px;top:561px">显示刀具接触</div>
<div style="left:167px;top:582px;width:292px;height:2px;background:#f6f6f6;border-top:1px solid #c4c4c4"></div>
<div class="btn" style="left:168px;top:587px;width:290px;height:27px;padding-top:5px">过切和碰撞设置</div>

<!-- speed -->
<div class="t" style="left:161px;top:751px">动画速度</div>
<div class="t" style="left:450px;top:772px">10</div>
<div style="left:169px;top:802px;width:285px;height:3px;border-top:1px solid #aaa;border-bottom:1px solid #fff;background:#d0d0d0"></div>
<div class="thumb" style="left:450px;top:793px"></div>
<div class="t" style="left:166px;top:816px">1</div>
<div class="t" style="left:455px;top:816px">10</div>

<div class="pb" style="left:198px"><svg width="28" height="27"><rect x="5" y="5" width="2" height="17" fill="#10107a"/><path d="M15 5v17L8 13.500zM25 5v17L17 13.500z" fill="#7c0a0a"/></svg></div>
<div class="pb" style="left:232px"><svg width="28" height="27"><rect x="9" y="5" width="2" height="17" fill="#10107a"/><path d="M20 5v17L12 13.500z" fill="#7c0a0a"/></svg></div>
<div class="pb" style="left:266px"><svg width="28" height="27"><path d="M18 6v15L10 13.500z" fill="#7c0a0a"/></svg></div>
<div class="pb" style="left:300px"><svg width="28" height="27"><path d="M11 6v15L19 13.500z" fill="#7c0a0a"/></svg></div>
<div class="pb" style="left:334px"><svg width="28" height="27"><path d="M9 5v17L17 13.500z" fill="#7c0a0a"/><rect x="19" y="5" width="2" height="17" fill="#10107a"/></svg></div>
<div class="pb" style="left:368px"><svg width="28" height="27"><path d="M4 5v17L11 13.500zM13 5v17L20 13.500z" fill="#7c0a0a"/><rect x="22" y="5" width="2" height="17" fill="#10107a"/></svg></div>
<div class="pb" style="left:402px;border-color:#b4b4b4;background:linear-gradient(#f2f2f2,#ececec 45%,#d8d8d8 55%,#e6e6e6)"><svg width="28" height="27"><rect x="8" y="7" width="13" height="13" fill="#a08a8c"/></svg></div>

<div style="left:158px;top:876px;width:313px;height:2px;background:#f6f6f6;border-top:1px solid #c0c0c0"></div>
<div class="btn" style="left:351px;top:882px;width:52px;height:23px;padding-top:3px;border-color:#3a7a3a;background:linear-gradient(#eef8ea,#bfe8b0 40%,#70d05a 55%,#a4e890)">确定</div>
<div class="btn" style="left:410px;top:882px;width:52px;height:23px;padding-top:3px">取消</div>
</body></html>
